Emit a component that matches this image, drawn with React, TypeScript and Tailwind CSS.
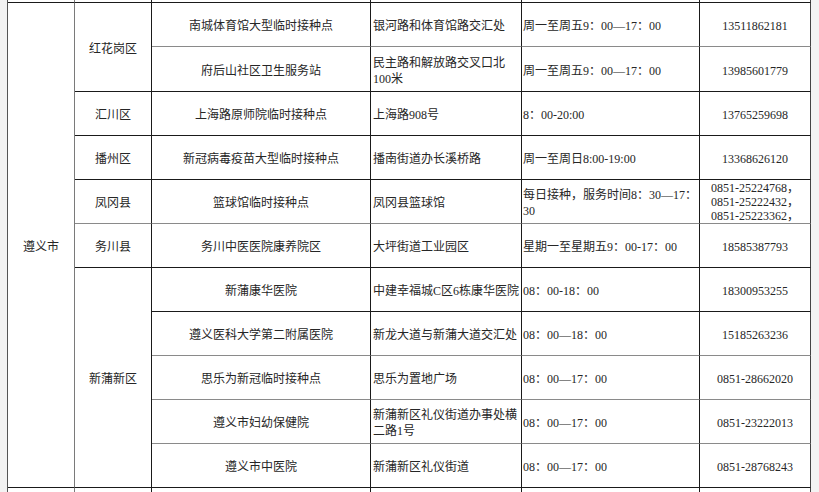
import React from 'react';

type Row = {
    site: string;
    addr: string[];
    time: string[];
    phone: string[];
    line: string;
};

const DARK = 'border-b-[#1a1a1a]';
const GRAY = 'border-b-[#8a8a8a]';

const rows: Row[] = [
    { site: '南城体育馆大型临时接种点', addr: ['银河路和体育馆路交汇处'], time: ['周一至周五9：00—17：00'], phone: ['13511862181'], line: GRAY },
    { site: '府后山社区卫生服务站', addr: ['民主路和解放路交叉口北', '100米'], time: ['周一至周五9：00—17：00'], phone: ['13985601779'], line: DARK },
    { site: '上海路原师院临时接种点', addr: ['上海路908号'], time: ['8：00-20:00'], phone: ['13765259698'], line: DARK },
    { site: '新冠病毒疫苗大型临时接种点', addr: ['播南街道办长溪桥路'], time: ['周一至周日8:00-19:00'], phone: ['13368626120'], line: DARK },
    { site: '篮球馆临时接种点', addr: ['凤冈县篮球馆'], time: ['每日接种，服务时间8：30—17：', '30'], phone: ['0851-25224768，', '0851-25222432，', '0851-25223362，'], line: GRAY },
    { site: '务川中医医院康养院区', addr: ['大坪街道工业园区'], time: ['星期一至星期五9：00-17：00'], phone: ['18585387793'], line: DARK },
    { site: '新蒲康华医院', addr: ['中建幸福城C区6栋康华医院'], time: ['08：00-18：00'], phone: ['18300953255'], line: DARK },
    { site: '遵义医科大学第二附属医院', addr: ['新龙大道与新蒲大道交汇处'], time: ['08：00—18：00'], phone: ['15185263236'], line: GRAY },
    { site: '思乐为新冠临时接种点', addr: ['思乐为置地广场'], time: ['08：00—17：00'], phone: ['0851-28662020'], line: GRAY },
    { site: '遵义市妇幼保健院', addr: ['新蒲新区礼仪街道办事处横', '二路1号'], time: ['08：00—17：00'], phone: ['0851-23222013'], line: GRAY },
    { site: '遵义市中医院', addr: ['新蒲新区礼仪街道'], time: ['08：00—17：00'], phone: ['0851-28768243'], line: DARK },
];

// district cells, keyed by the row they start on
const districts: Record<number, { name: string; span: string; line: string }> = {
    0: { name: '红花岗区', span: 'row-span-2', line: DARK },
    2: { name: '汇川区', span: 'row-span-1', line: DARK },
    3: { name: '播州区', span: 'row-span-1', line: DARK },
    4: { name: '凤冈县', span: 'row-span-1', line: GRAY },
    5: { name: '务川县', span: 'row-span-1', line: DARK },
    6: { name: '新蒲新区', span: 'row-span-5', line: DARK },
};

const Lines = ({ lines }: { lines: string[] }) => (
    <div className="whitespace-nowrap">
        {lines.map((l, i) => (
            <div key={i}>{l}</div>
        ))}
    </div>
);

export default function App() {
    const cols = [
        'border-r-[#7a7a7a]',
        'border-r-[#1a1a1a]',
        'border-r-[#1a1a1a]',
        'border-r-[#1a1a1a]',
        'border-r-[#1a1a1a]',
        'border-r-[#444]',
    ];

    return (
        <div className="h-[492px] w-full overflow-hidden bg-[#f3f3f3] pl-[7px]">
            <div className="grid w-[804px] grid-cols-[67px_77px_219px_151px_178px_111px] grid-rows-[3px_44px_45px_repeat(9,44px)_5px] border-l border-l-[#555] bg-white font-['Liberation_Serif','Noto_Sans_CJK_SC',serif] text-[12px] leading-[16px] text-[#262626]">
                {cols.map((c, i) => (
                    <div key={`t${i}`} className={`border-r border-b border-b-[#1a1a1a] ${c}`} />
                ))}

                {rows.map((r, i) => (
                    <React.Fragment key={i}>
                        {i === 0 && (
                            <div className="row-span-11 flex items-center justify-center border-r border-b border-r-[#7a7a7a] border-b-[#1a1a1a] pt-[3px]">
                                遵义市
                            </div>
                        )}
                        {districts[i] && (
                            <div className={`${districts[i].span} flex items-center justify-center border-r border-b border-r-[#1a1a1a] pt-[3px] ${districts[i].line}`}>
                                {districts[i].name}
                            </div>
                        )}
                        <div className={`flex items-center justify-center border-r border-b border-r-[#1a1a1a] pt-[3px] ${r.line}`}>
                            {r.site}
                        </div>
                        <div className={`flex items-center border-r border-b border-r-[#1a1a1a] pl-[2px] pt-[3px] ${r.line}`}>
                            <Lines lines={r.addr} />
                        </div>
                        <div className={`flex items-center border-r border-b border-r-[#1a1a1a] pl-px pt-[3px] ${r.line}`}>
                            <Lines lines={r.time} />
                        </div>
                        <div
                            className={`flex items-center justify-center border-r border-b border-r-[#444] ${r.phone.length > 1 ? 'pt-0 leading-[14px]' : 'pt-[3px]'} ${r.line}`}
                        >
                            <div className="whitespace-nowrap text-center">
                                {r.phone.map((p, j) => (
                                    <div key={j}>{p}</div>
                                ))}
                            </div>
                        </div>
                    </React.Fragment>
                ))}

                {cols.map((c, i) => (
                    <div key={`b${i}`} className={`border-r ${c}`} />
                ))}
            </div>
        </div>
    );
}
